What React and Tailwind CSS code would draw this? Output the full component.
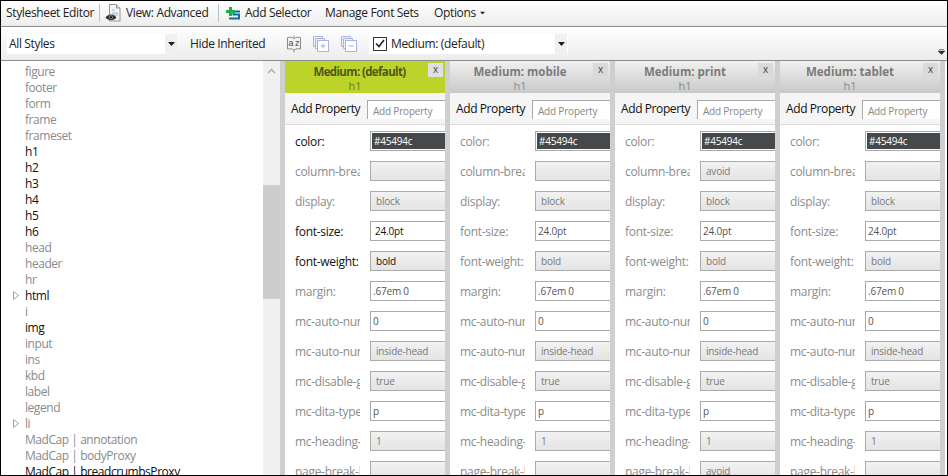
const tree = [
  ["figure"], ["footer"], ["form"], ["frame"], ["frameset"],
  ["h1", 1], ["h2", 1], ["h3", 1], ["h4", 1], ["h5", 1], ["h6", 1],
  ["head"], ["header"], ["hr"], ["html", 1, 1], ["i"], ["img", 1],
  ["input"], ["ins"], ["kbd"], ["label"], ["legend"], ["li", 0, 1],
  ["MadCap | annotation"], ["MadCap | bodyProxy"], ["MadCap | breadcrumbsProxy", 1],
];

const rows = [
  ["color:", "color", "#45494c"],
  ["column-break-before:", "select", ""],
  ["display:", "select", "block"],
  ["font-size:", "text", "24.0pt"],
  ["font-weight:", "select", "bold"],
  ["margin:", "text", ".67em 0"],
  ["mc-auto-number-class:", "text", "0"],
  ["mc-auto-number-position:", "select", "inside-head"],
  ["mc-disable-glossary:", "select", "true"],
  ["mc-dita-type:", "text", "p"],
  ["mc-heading-level:", "select", "1"],
  ["page-break-before:", "select", ""],
];

const panels = [
  { name: "Medium: (default)", active: true },
  { name: "Medium: mobile" },
  { name: "Medium: print", overrides: { 1: "avoid", 11: "avoid" } },
  { name: "Medium: tablet" },
];

const ACTIVE = [0, 3, 4];

function Caret({ className = "" }) {
  return (
    <svg width="7" height="4" viewBox="0 0 7 4" className={className}>
      <path d="M0 0h7L3.5 4z" fill="#1c1c1c" />
    </svg>
  );
}

function Row({ label, kind, value, active, panelActive }) {
  const on = active && panelActive;
  return (
    <div className="flex h-[30px] items-center pl-[10px]">
      <div className={`mr-[10px] w-[65px] shrink-0 overflow-hidden whitespace-nowrap pt-[2px] text-[12px] tracking-[-0.3px] ${on ? "text-[#111]" : "text-[#8c8c8c]"}`}>
        {label}
      </div>
      {kind === "color" && (
        <div className="h-[20px] w-[80px] shrink-0 border border-[#a9a9a9] bg-white p-px">
          <div className="flex h-full items-center bg-[#45494c] pl-[2px] text-[10px] tracking-[-0.2px] text-white">{value}</div>
        </div>
      )}
      {kind === "text" && (
        <div className={`flex h-[20px] w-[80px] shrink-0 items-center border border-[#a9a9a9] bg-white text-[10px] tracking-[-0.2px] ${on ? "pl-[4px] text-[#111]" : "pl-[2px] text-[#555]"}`}>
          {value}
        </div>
      )}
      {kind === "select" && (
        <div className={`flex h-[20px] w-[80px] shrink-0 items-center border border-[#ababab] bg-gradient-to-b from-[#f2f2f2] to-[#e4e4e4] pl-[5px] text-[10px] tracking-[-0.2px] ${on ? "text-[#111]" : "text-[#7a7a7a]"}`}>
          {value}
        </div>
      )}
    </div>
  );
}

function Panel({ panel }) {
  return (
    <div className="flex w-[165px] shrink-0">
      <div className="w-[160px] overflow-hidden bg-white">
        <div className={`relative flex h-[32px] flex-col items-center pt-[3px] ${panel.active ? "bg-[#bcd42a]" : "bg-gradient-to-b from-[#f0f0f0] to-[#c9c9c9]"}`}>
          <div className={`text-[11.5px] font-bold leading-[15px] ${panel.active ? "pr-[11px] tracking-[-0.63px] text-[#4e5a12]" : "pr-[20px] tracking-[0px] text-[#7b7b7b]"}`}>{panel.name}</div>
          <div className={`pr-[20px] text-[11px] leading-[13px] ${panel.active ? "text-[#6a7a1c]" : "text-[#8a8a8a]"}`}>h1</div>
          <div className={`absolute right-[2px] top-[2px] flex h-[14px] w-[15px] items-center justify-center pb-[1px] text-[10px] text-[#444] ${panel.active ? "bg-[#e0e0e0]" : "bg-[#dadada]"}`}>x</div>
        </div>
        <div className="flex h-[32px] items-center border-b border-[#dcdcdc] bg-[#f5f5f5] pl-[6px]">
          <div className="w-[76px] shrink-0 whitespace-nowrap text-[12px] tracking-[-0.4px] text-[#111]">Add Property</div>
          <div className="mb-[-1px] flex h-[19px] w-[90px] shrink-0 items-center border-l border-t border-[#a9a9a9] bg-white pl-[5px] pt-[3px] text-[10px] tracking-[-0.2px] text-[#888]">Add Property</div>
        </div>
        <div className="pt-[1px]">
          {rows.map(([label, kind, value], i) => (
            <Row
              key={i}
              label={label}
              kind={kind}
              value={(panel.overrides && panel.overrides[i]) || value}
              active={ACTIVE.includes(i)}
              panelActive={panel.active}
            />
          ))}
        </div>
      </div>
      <div className="w-[5px] bg-[#cfcfcf]" />
    </div>
  );
}

function EyeDocIcon() {
  return (
    <svg width="18" height="20" viewBox="0 0 18 20" className="shrink-0">
      <path d="M4.5 1.5h7l3.5 3.5v13h-10.5z" fill="#f2f4f6" stroke="#8d979b" />
      <path d="M11.5 1.5v3.5h3.5" fill="#d5dde0" stroke="#8d979b" />
      <path d="M7 7h3M7 10h6M7 12h6" stroke="#9fb4bd" strokeWidth="1" />
      <path d="M0.5 14.5c3-4 8-4 11 0c-3 3.5-8 3.5-11 0z" fill="#2a2a2a" />
      <circle cx="6" cy="14.2" r="2.2" fill="#777" />
      <circle cx="6" cy="14.2" r="1" fill="#0c0c0c" />
    </svg>
  );
}

function AddSelectorIcon() {
  return (
    <svg width="15" height="15" viewBox="0 0 15 15" className="shrink-0">
      <path d="M14 5.500H7.500V8.500H13V12.500H3" fill="none" stroke="#0d6f9e" strokeWidth="2" />
      <path d="M3 1h3v3h3v3h-3v3h-3v-3h-3v-3h3z" fill="#19b14a" />
    </svg>
  );
}

function AzIcon() {
  return (
    <svg width="16" height="20" viewBox="0 0 16 20" className="shrink-0">
      <path d="M8 4.500C6 3 3 3 1.500 3.500v11.500C3 14.500 6 14.500 8 16C10 14.500 13 14.500 14.500 15V3.500C13 3 10 3 8 4.500z" fill="#f4f4f4" stroke="#8a8a8a" />
      <path d="M8 1.500v2M8 16v2.500" stroke="#8a8a8a" />
      <text x="4.800" y="12" fontSize="9" textAnchor="middle" fill="#444" fontFamily="Liberation Sans">a</text>
      <text x="11.200" y="12" fontSize="9" textAnchor="middle" fill="#444" fontFamily="Liberation Sans">z</text>
    </svg>
  );
}

function StackIcon({ minus }) {
  return (
    <svg width="16" height="16" viewBox="0 0 16 16" className="shrink-0">
      <path d="M.5.500h9v2h-7v8h-2z" fill="#eef0fa" stroke="#aab4e4" />
      <path d="M2.500 2.500h9v2h-7v8h-2z" fill="#eef0fa" stroke="#aab4e4" />
      <rect x="4.500" y="4.500" width="11" height="11" fill="#fff" stroke="#aab4e4" />
      <path d="M7.500 10h5" stroke="#a3aee0" />
      {!minus && <path d="M10 7.500v5" stroke="#a3aee0" />}
    </svg>
  );
}

export default function App() {
  return (
    <div className="flex h-[476px] w-[948px] flex-col overflow-hidden border border-black bg-white text-[12px] text-[#222] [font-family:'Open_Sans','Noto_Sans',sans-serif]">
      <div className="flex h-[26px] shrink-0 items-center whitespace-nowrap border-b border-[#8d8d8d] bg-gradient-to-b from-white to-[#ededed] pb-[1px] pl-[5px] tracking-[-0.35px]">
        <span className="w-[93px]">Stylesheet Editor</span>
        <span className="h-[18px] w-px bg-[#b9c4c9]" />
        <span className="ml-[5px] w-[21px]"><EyeDocIcon /></span>
        <span className="w-[92px]">View: Advanced</span>
        <span className="h-[18px] w-px bg-[#b9c4c9]" />
        <span className="ml-[7px] w-[19px]"><AddSelectorIcon /></span>
        <span className="w-[80px]">Add Selector</span>
        <span className="w-[109px]">Manage Font Sets</span>
        <span>Options</span>
        <Caret className="ml-[3px] scale-75" />
      </div>

      <div className="relative flex h-[34px] shrink-0 items-center whitespace-nowrap border-b border-[#8d8d8d] bg-gradient-to-b from-white to-[#ececec] pl-[6px] tracking-[-0.35px]">
        <div className="flex h-[20px] w-[170px] items-center justify-between bg-white pl-[2px]">
          <span>All Styles</span>
          <span className="flex h-full w-[12px] items-center justify-center bg-[#f0f0f0]"><Caret /></span>
        </div>
        <span className="ml-[13px] w-[96px]">Hide Inherited</span>
        <AzIcon />
        <span className="ml-[11px]"><StackIcon /></span>
        <span className="ml-[12px]"><StackIcon minus /></span>
        <div className="ml-[12px] flex h-[20px] w-[199px] items-center bg-white pl-[4px]">
          <span className="flex h-[14px] w-[14px] items-center justify-center border border-[#333] bg-white">
            <svg width="10" height="9" viewBox="0 0 10 9"><path d="M1 4.500l3 3L9 1" fill="none" stroke="#222" strokeWidth="1.600" /></svg>
          </span>
          <span className="ml-[4px]">Medium: (default)</span>
          <span className="ml-auto mr-[1px] flex h-full w-[12px] items-center justify-center bg-[#f0f0f0]"><Caret /></span>
        </div>
        <svg width="7" height="6" viewBox="0 0 7 6" className="absolute bottom-[5px] right-[2px]">
          <path d="M1 .5h5M0 2h7l-3.500 3.500z" fill="#333" stroke="#333" strokeWidth=".5" />
        </svg>
      </div>

      <div className="flex min-h-0 flex-1">
        <div className="w-[262px] shrink-0 overflow-hidden bg-white pt-[3px]">
          {tree.map(([name, on, arrow]) => (
            <div key={name} className={`relative h-[16px] whitespace-nowrap pl-[24px] text-[12px] leading-[16px] tracking-[-0.45px] ${on ? "text-[#111]" : "text-[#8a8a8a]"}`}>
              {arrow && (
                <svg width="6" height="9" viewBox="0 0 6 9" className="absolute left-[12px] top-[3px]">
                  <path d="M.5.500l5 4-5 4z" fill="#fff" stroke="#a0a0a0" />
                </svg>
              )}
              {name}
            </div>
          ))}
        </div>
        <div className="flex w-[17px] shrink-0 flex-col bg-[#f0f0f0]">
          <div className="flex h-[17px] items-center justify-center pt-[3px]">
            <svg width="9" height="6" viewBox="0 0 9 6"><path d="M1 5l3.500-3.500L8 5" fill="none" stroke="#a6a6a6" strokeWidth="1.300" /></svg>
          </div>
          <div className="mt-[107px] h-[114px] bg-[#cdcdcd]" />
        </div>
        <div className="w-[5px] shrink-0 bg-[#cfcfcf]" />
        <div className="flex">
          {panels.map((p) => <Panel key={p.name} panel={p} />)}
        </div>
      </div>
    </div>
  );
}
